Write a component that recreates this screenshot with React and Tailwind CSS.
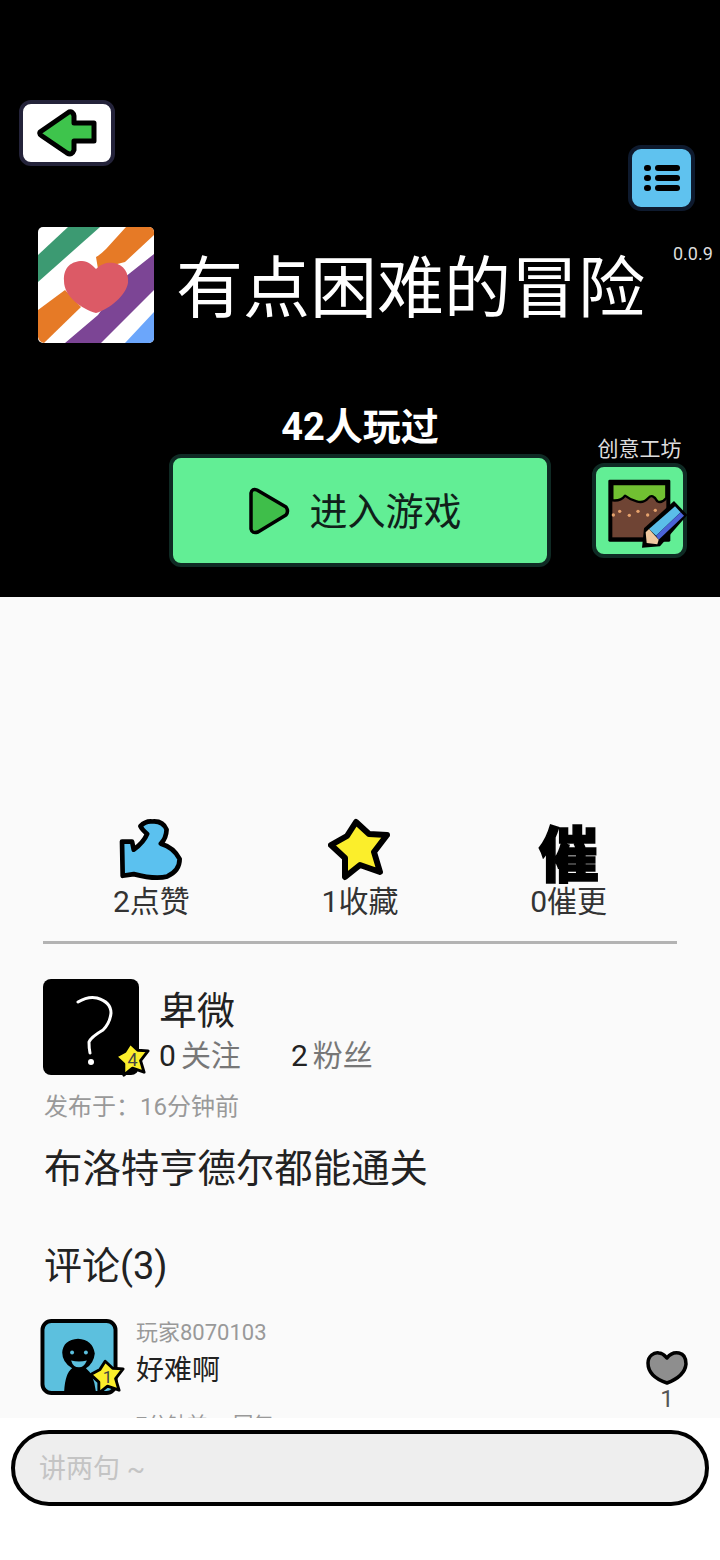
import React from "react";

const BackIcon = () => (
  <svg width="60" height="50" viewBox="0 0 60 50">
    <path d="M3 24 L32 4 Q36 3 37 8 L37 15 L57 15 L57 33 L37 33 L37 42 Q35 48 30 45 L5 28 Q2 26 3 24 Z" fill="#3ec44c" stroke="#000" strokeWidth="5" strokeLinejoin="round" />
  </svg>
);

const MenuIcon = () => (
  <svg width="38" height="28" viewBox="0 0 38 28">
    <rect x="1" y="1" width="7" height="6" rx="3" fill="#000" />
    <rect x="1" y="11" width="7" height="6" rx="3" fill="#000" />
    <rect x="1" y="21" width="7" height="6" rx="3" fill="#000" />
    <rect x="12" y="1" width="25" height="6" rx="3" fill="#000" />
    <rect x="12" y="11" width="25" height="6" rx="3" fill="#000" />
    <rect x="12" y="21" width="25" height="6" rx="3" fill="#000" />
  </svg>
);

const GameLogo = () => (
  <svg width="116" height="116" viewBox="0 0 116 116" className="rounded-[5px]">
    <rect width="116" height="116" fill="#fff" />
    <path d="M0 28 L30 0 L62 0 L0 55 Z" fill="#3c9a72" />
    <path d="M88 0 L116 0 L116 8 L87 35 L60 42 L58 30 Q62 28 68 22 Z" fill="#e67a26" />
    <path d="M0 83 L27 63 L43 80 L6 116 Q1 115 0 110 Z" fill="#e67a26" />
    <path d="M116 27 L116 63 L63 116 L27 116 L60 88 L87 50 Z" fill="#7c4595" />
    <path d="M116 85 L116 116 L87 116 Z" fill="#6ba6fb" />
    <path d="M58 86 C44 82 26 70 26 54 C25 40 34 34 44 34 C50 34 54 38 58 42 C64 36 70 35 76 36 C86 38 91 46 90 56 C88 68 72 82 58 86 Z" fill="#dc5a66" />
  </svg>
);

const PlayIcon = () => (
  <svg width="42" height="48" viewBox="0 0 42 48">
    <path d="M3 6 Q4 1 9 3 L38 20 Q41 24 38 28 L10 45 Q4 47 3 42 Z" fill="#3fbe4a" stroke="#000" strokeWidth="3.5" strokeLinejoin="round" />
  </svg>
);

// drawn on the 3x crop grid so the numbers line up with the reference
const WorkshopIcon = () => (
  <svg width="87" height="87" viewBox="48 112 261 261" className="overflow-visible">
    <rect x="85" y="150" width="186" height="186" rx="4" fill="#000" />
    <rect x="97" y="163" width="162" height="160" fill="#6f4434" />
    <path d="M97 163 H259 V205 Q245 222 232 215 Q218 190 205 205 Q190 222 170 215 Q150 210 135 198 Q122 215 97 212 Z" fill="#71c032" stroke="#000" strokeWidth="7" strokeLinejoin="round" />
    <g fill="#e7a36d">
      <circle cx="100" cy="256" r="5" />
      <circle cx="119" cy="245" r="5" />
      <circle cx="148" cy="257" r="5" />
      <circle cx="174" cy="245" r="5" />
      <circle cx="203" cy="256" r="5" />
      <circle cx="226" cy="242" r="5" />
    </g>
    <path d="M186 354 L192 296 L282 214 L322 256 L240 350 Z" fill="#000" />
    <path d="M207 298 L285 230 L302 248 L228 318 Z" fill="#5bbde9" />
    <path d="M228 318 L302 248 L312 258 L236 330 Z" fill="#4a63d8" />
    <path d="M197 308 L207 298 L236 330 L232 344 L200 340 Z" fill="#f1c9a0" />
  </svg>
);

const ThumbIcon = () => (
  <svg width="67" height="64" viewBox="88 28 200 190">
    <path d="M100 98 L130 98 L135 122 Q165 100 175 75 Q160 62 155 52 Q170 36 190 38 Q222 35 233 62 Q232 88 216 104 Q255 115 272 150 Q272 185 235 202 Q200 212 135 195 L102 200 Z" fill="#5bc1ef" stroke="#000" strokeWidth="14" strokeLinejoin="round" />
  </svg>
);

const StarIcon = ({ size, stroke = 5, children }) => (
  <span className="relative block" style={{ width: size, height: size }}>
    <svg width={size} height={size} viewBox="0 0 64 64" className="block">
      <path d="M28 4 L41 16 L59 17 L46 34 L52 54 L32 47 L17 59 L17 40 L3 27 L19 18 Z" fill="#fbee2b" stroke="#000" strokeWidth={stroke} strokeLinejoin="round" />
    </svg>
    {children}
  </span>
);

const HeartIcon = () => (
  <svg width="42" height="36" viewBox="0 0 42 36">
    <path d="M21 33 C12 30 2 24 2 13 C2 6 8 2 13 3 C17 3 19 6 21 8 C24 4 28 2 33 3 C38 4 40 9 40 14 C39 24 29 30 21 33 Z" fill="#8e8e8e" stroke="#000" strokeWidth="3.5" strokeLinejoin="round" />
  </svg>
);

const QuestionAvatar = () => (
  <svg width="96" height="96" viewBox="0 0 96 96" className="rounded-[8px] bg-black">
    <path d="M35 23 Q45 17 54 19 Q68 23 68 34 Q67 44 60 51 Q48 58 46 63 Q46 70 47 74" fill="none" stroke="#fff" strokeWidth="3" strokeLinecap="round" />
    <circle cx="48" cy="83" r="3" fill="#fff" />
  </svg>
);

const PlayerAvatar = () => (
  <svg width="78" height="76" viewBox="0 0 78 77">
    <rect x="2" y="2" width="74" height="73" rx="9" fill="#5cc0de" stroke="#000" strokeWidth="4" />
    <path d="M24 73 Q25 55 32 50 Q22 44 22 34 Q23 21 38 20 Q53 21 55 35 Q54 45 46 50 Q54 56 56 73 Z" fill="#000" />
    <circle cx="32" cy="34" r="2" fill="#5cc0de" />
    <circle cx="46" cy="34" r="2" fill="#5cc0de" />
    <path d="M31 42 Q39 44 47 42 Q44 49 39 49 Q33 49 31 42 Z" fill="#5cc0de" />
  </svg>
);

const Stat = ({ icon, label }) => (
  <div className="flex flex-col items-center">
    <div className="flex h-[64px] items-end justify-center">{icon}</div>
    <span className="text-[30px] leading-[40px] text-[#333]">{label}</span>
  </div>
);

const App = () => {
  return (
    <div className="flex h-[1560px] w-[720px] flex-col overflow-hidden bg-[#fafafa] font-['Roboto','Noto_Sans_CJK_SC',sans-serif]">
      {/* top black panel */}
      <div className="h-[597px] shrink-0 bg-black pt-[100px] text-white">
        <div className="flex items-start justify-between pl-[19px] pr-[25px]">
          <button className="flex h-[66px] w-[96px] items-center justify-center rounded-[12px] border-[4px] border-[#24233a] bg-white">
            <BackIcon />
          </button>
          <button className="mt-[45px] flex h-[66px] w-[67px] items-center justify-center rounded-[13px] border-[4px] border-[#0e1a2e] bg-[#5fc2ef]">
            <MenuIcon />
          </button>
        </div>

        <div className="mt-[16px] flex items-start pl-[38px]">
          <GameLogo />
          <h1 className="ml-[22px] mt-[22px] text-[67px] font-normal leading-[80px] whitespace-nowrap">有点困难的冒险</h1>
          <span className="ml-[28px] mt-[16px] text-[18px] leading-[22px] text-[#ddd]">0.0.9</span>
        </div>

        <div className="mt-[61px] text-center text-[38px] font-bold leading-[46px]">42人玩过</div>

        <div className="relative mt-[4px] flex justify-center">
          <button className="flex h-[113px] w-[382px] items-center justify-center gap-[19px] rounded-[12px] border-[4px] border-[#0f2a24] bg-[#62ee95] pr-[10px] text-[38px] text-[#10201a]">
            <PlayIcon />
            <span className="mt-[3px]">进入游戏</span>
          </button>
          <div className="absolute left-[592px] top-[-19px] flex w-[95px] flex-col items-center">
            <span className="text-[21px] leading-[28px] whitespace-nowrap text-[#ddd]">创意工坊</span>
            <div className="h-[95px] w-[95px] rounded-[12px] border-[4px] border-[#0f2a24] bg-[#62ee95]">
              <WorkshopIcon />
            </div>
          </div>
        </div>
      </div>

      {/* scrolling detail area */}
      <div className="min-h-0 flex-1 overflow-hidden">
        <div className="grid grid-cols-3 px-[47px] pt-[221px]">
          <Stat icon={<ThumbIcon />} label="2点赞" />
          <Stat icon={<StarIcon size={64} stroke={6} />} label="1收藏" />
          <Stat
            icon={<span className="text-[60px] font-black leading-[50px] text-black [-webkit-text-stroke:1.5px_#000]">催</span>}
            label="0催更"
          />
        </div>

        <div className="mx-[43px] mt-[19px] h-[3px] bg-[#b3b3b3]" />

        <div className="mt-[35px] flex pl-[43px]">
          <div className="relative h-[96px] w-[96px]">
            <QuestionAvatar />
            <div className="absolute left-[71px] top-[62px]">
              <StarIcon size={37}>
                <span className="absolute inset-0 flex items-center justify-center text-[18px] text-[#444]">4</span>
              </StarIcon>
            </div>
          </div>
          <div className="ml-[20px]">
            <div className="mt-[7px] text-[38px] leading-[50px] text-[#222]">卑微</div>
            <div className="flex text-[30px] leading-[40px]">
              <span className="text-[#222]">0</span>
              <span className="ml-[5px] text-[#777]">关注</span>
              <span className="ml-[50px] text-[#222]">2</span>
              <span className="ml-[5px] text-[#777]">粉丝</span>
            </div>
          </div>
        </div>

        <div className="ml-[44px] mt-[15px] text-[24px] leading-[32px] text-[#999]">发布于：16分钟前</div>
        <div className="ml-[44px] mt-[21px] text-[38.4px] leading-[50px] text-[#222]">布洛特亨德尔都能通关</div>
        <div className="ml-[44px] mt-[47px] text-[38px] leading-[50px] text-[#222]">评论(3)</div>

        <div className="mt-[28px] flex items-start pl-[40px] pr-[32px]">
          <div className="relative h-[76px] w-[78px]">
            <PlayerAvatar />
            <div className="absolute left-[49px] top-[40px]">
              <StarIcon size={37}>
                <span className="absolute inset-0 flex items-center justify-center text-[17px] text-[#444]">1</span>
              </StarIcon>
            </div>
          </div>
          <div className="ml-[18px] flex-1">
            <div className="text-[22px] leading-[28px] text-[#999]">玩家8070103</div>
            <div className="mt-[5px] text-[28px] leading-[38px] text-[#222]">好难啊</div>
            <div className="mt-[20px] text-[20px] leading-[30px] text-[#999]">
              <span>7分钟前</span>
              <span className="ml-[26px]">回复</span>
            </div>
          </div>
          <div className="mt-[31px] flex flex-col items-center">
            <HeartIcon />
            <span className="text-[24px] leading-[26px] text-[#555]">1</span>
          </div>
        </div>
      </div>

      {/* comment input */}
      <div className="h-[142px] shrink-0 bg-white px-[11px] pt-[12px]">
        <div className="flex h-[76px] w-[698px] items-center rounded-[38px] border-[4px] border-black bg-[#eeeeee] pl-[24px] pt-[3px] text-[27px] text-[#c4c4c4]">
          讲两句 ~
        </div>
      </div>
    </div>
  );
};

export default App;
